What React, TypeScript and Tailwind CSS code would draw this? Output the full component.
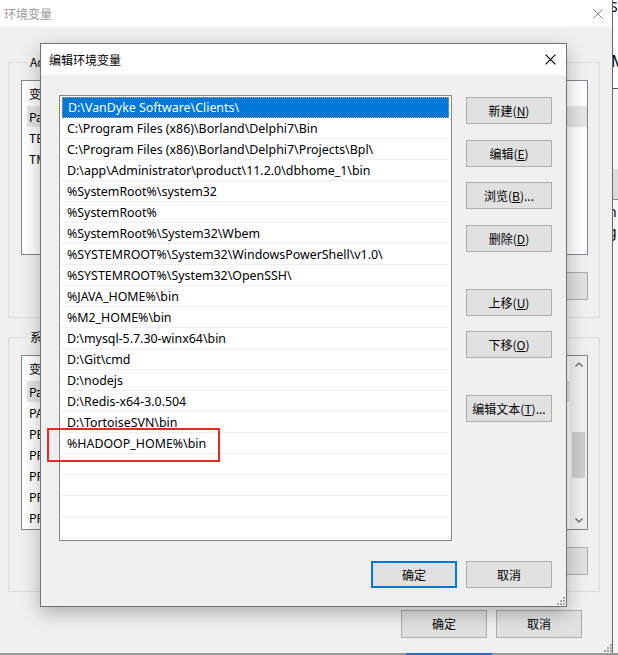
import React from "react";

const pathRows: string[] = [
  "D:\\VanDyke Software\\Clients\\",
  "C:\\Program Files (x86)\\Borland\\Delphi7\\Bin",
  "C:\\Program Files (x86)\\Borland\\Delphi7\\Projects\\Bpl\\",
  "D:\\app\\Administrator\\product\\11.2.0\\dbhome_1\\bin",
  "%SystemRoot%\\system32",
  "%SystemRoot%",
  "%SystemRoot%\\System32\\Wbem",
  "%SYSTEMROOT%\\System32\\WindowsPowerShell\\v1.0\\",
  "%SYSTEMROOT%\\System32\\OpenSSH\\",
  "%JAVA_HOME%\\bin",
  "%M2_HOME%\\bin",
  "D:\\mysql-5.7.30-winx64\\bin",
  "D:\\Git\\cmd",
  "D:\\nodejs",
  "D:\\Redis-x64-3.0.504",
  "D:\\TortoiseSVN\\bin",
  "%HADOOP_HOME%\\bin",
  "",
  "",
  "",
  "",
];

function CloseX({ color, size = 10 }: { color: string; size?: number }) {
  return (
    <svg width={size} height={size} viewBox="0 0 10 10">
      <path d="M0.5 0.5 L9.5 9.5 M9.5 0.5 L0.5 9.5" stroke={color} strokeWidth="1" fill="none" />
    </svg>
  );
}

function Grip() {
  return (
    <svg width="9" height="9" viewBox="0 0 9 9">
      <g fill="#a8a8a8">
        <rect x="7" y="1" width="2" height="2" />
        <rect x="4" y="4" width="2" height="2" />
        <rect x="7" y="4" width="2" height="2" />
        <rect x="1" y="7" width="2" height="2" />
        <rect x="4" y="7" width="2" height="2" />
        <rect x="7" y="7" width="2" height="2" />
      </g>
    </svg>
  );
}

function Btn({ children, className = "" }: { children: React.ReactNode; className?: string }) {
  return (
    <div
      className={`flex items-center justify-center h-[27px] w-[86px] bg-[#e1e1e1] text-[12px] text-black leading-none ${className}`}
    >
      {children}
    </div>
  );
}

function BgListView({ names, scroll }: { names: string[]; scroll?: boolean }) {
  return (
    <div className="h-[175px] w-[567px] border border-[#828790] bg-white flex overflow-hidden">
      <div className="flex-1 flex flex-col">
        <div className="h-[25px] flex items-center pl-[7px] text-[12px] text-black">
          <span className="w-[160px]">变量</span>
          <span>值</span>
        </div>
        {names.map((n, i) => (
          <div
            key={i}
            className={`h-[21px] flex items-center ml-[5px] pl-[2px] text-[12px] text-black ${
              i === 0 ? "bg-[#e5e5e5]" : ""
            }`}
          >
            {n}
          </div>
        ))}
      </div>
      {scroll ? (
        <div className="w-[17px] h-full flex flex-col bg-[#f0f0f0]">
          <div className="h-[17px] flex items-center justify-center">
            <svg width="8" height="5" viewBox="0 0 8 5">
              <path d="M0.5 4.5 L4 1 L7.5 4.5" stroke="#606060" strokeWidth="1.2" fill="none" />
            </svg>
          </div>
          <div className="flex-1 flex flex-col pt-[59px] px-[2px]">
            <div className="h-[46px] bg-[#cdcdcd]" />
          </div>
          <div className="h-[17px] flex items-center justify-center">
            <svg width="8" height="5" viewBox="0 0 8 5">
              <path d="M0.5 0.5 L4 4 L7.5 0.5" stroke="#606060" strokeWidth="1.2" fill="none" />
            </svg>
          </div>
        </div>
      ) : null}
    </div>
  );
}

function GroupButtons() {
  return (
    <div className="flex justify-end gap-[9px] mt-[17px]">
      <Btn className="h-[28px] border border-[#adadad]">新建(<u>W</u>)...</Btn>
      <Btn className="h-[28px] border border-[#adadad]">编辑(<u>I</u>)...</Btn>
      <Btn className="h-[28px] border border-[#adadad] w-[80px]">删除(<u>L</u>)</Btn>
    </div>
  );
}

export default function App() {
  const cjk = "font-['Microsoft_YaHei','Noto_Sans_CJK_SC',sans-serif]";
  return (
    <div className={`relative w-[618px] h-[655px] overflow-hidden bg-[#f0f0f0] ${cjk}`}>
      {/* background window */}
      <div className="absolute left-0 top-0 w-[612px] h-[653px] flex flex-col bg-[#f0f0f0]">
        <div className="h-[27px] bg-white flex items-center justify-between pl-[4px] pr-[9px]">
          <span className="text-[12px] text-[#9a9a9a]">环境变量</span>
          <CloseX color="#8a8a8a" />
        </div>
        <div className="flex-1 flex flex-col px-[8px]">
          <fieldset className="mt-[27px] w-[592px] border border-[#dcdcdc] pl-[12px] pr-[11px] pt-[10px] pb-[17px]">
            <legend className="ml-[7px] px-[2px] text-[12px] leading-[16px] text-black">
              Admin 的用户变量
            </legend>
            <BgListView names={["Path", "TEMP", "TMP"]} />
            <GroupButtons />
          </fieldset>
          <fieldset className="mt-[11px] w-[592px] border border-[#dcdcdc] pl-[12px] pr-[11px] pt-[10px] pb-[16px]">
            <legend className="ml-[7px] px-[2px] text-[12px] leading-[16px] text-black">
              系统变量(<u>S</u>)
            </legend>
            <BgListView
              names={["Path", "PATHEXT", "PERL5LIB", "PROCESSOR_ARCHITECTURE", "PROCESSOR_IDENTIFIER", "PROCESSOR_LEVEL", "PROCESSOR_REVISION"]}
              scroll
            />
            <GroupButtons />
          </fieldset>
          <div className="flex justify-end gap-[9px] mt-[18px] pr-[22px]">
            <Btn className="h-[28px] border border-[#adadad]">确定</Btn>
            <Btn className="h-[28px] border border-[#adadad]">取消</Btn>
          </div>
        </div>
        <div className="absolute right-[0px] bottom-[1px]">
          <Grip />
        </div>
      </div>

      {/* bottom taskbar edge */}
      <div className="absolute left-0 bottom-0 w-[618px] h-[2px] bg-[#9a9a9a] flex">
        <div className="ml-[406px] w-[86px] h-full bg-[#2a6fbf]" />
      </div>

      {/* right neighbouring window strip */}
      <div className="absolute left-[612px] top-0 w-[6px] h-[653px] border-l border-[#6a6a6a] bg-[#f7f7f7] flex flex-col overflow-hidden text-[14px] text-black font-['Noto_Sans',sans-serif] leading-none">
        <div className="h-[18px] bg-white -ml-[3px]">S</div>
        <div className="h-[35px] bg-white" />
        <div className="h-[35px] bg-white -ml-[2px] text-[16px]">M</div>
        <div className="h-[1px] bg-[#555]" />
        <div className="h-[80px]" />
        <div className="h-[30px] bg-[#dcdcdc]" />
        <div className="h-[1px] bg-[#888]" />
        <div className="h-[25px] -ml-[5px] pt-[5px]">n</div>
        <div className="h-[25px] -ml-[5px]">g</div>
      </div>

      {/* foreground dialog */}
      <div className="absolute left-[40px] top-[43px] w-[527px] h-[564px] border border-[#717171] bg-[#f0f0f0] shadow-[0_6px_18px_rgba(0,0,0,0.28)] flex flex-col">
        <div className="h-[31px] bg-white flex items-center justify-between pl-[8px] pr-[10px]">
          <span className="text-[12px] text-black">编辑环境变量</span>
          <CloseX color="#000000" size={11} />
        </div>
        <div className="flex-1 flex flex-col pl-[18px] pr-[14px] pt-[20px]">
          <div className="flex">
            <div className="w-[393px] h-[446px] border border-[#828790] bg-white px-[2px] pt-[1px] flex flex-col overflow-hidden font-['Segoe_UI','Noto_Sans',sans-serif] text-[12.4px]">
              {pathRows.map((r, i) => (
                <div
                  key={i}
                  className={`h-[21px] shrink-0 flex items-center pl-[5px] pt-[2px] whitespace-nowrap ${
                    i === 0
                      ? "bg-[#0078d7] text-white border border-dotted border-[#d9a35a]"
                      : "text-black border-b border-[#efefef]"
                  }`}
                >
                  {r}
                </div>
              ))}
            </div>
            <div className="ml-[14px] flex flex-col">
              <Btn className="mt-[2px] border border-[#adadad]">新建(<u>N</u>)</Btn>
              <Btn className="mt-[16px] border border-[#adadad]">编辑(<u>E</u>)</Btn>
              <Btn className="mt-[15px] border border-[#adadad]">浏览(<u>B</u>)...</Btn>
              <Btn className="mt-[16px] border border-[#adadad]">删除(<u>D</u>)</Btn>
              <Btn className="mt-[37px] border border-[#adadad]">上移(<u>U</u>)</Btn>
              <Btn className="mt-[15px] border border-[#adadad]">下移(<u>O</u>)</Btn>
              <Btn className="mt-[37px] border border-[#adadad]">编辑文本(<u>T</u>)...</Btn>
            </div>
          </div>
          <div className="flex justify-end gap-[9px] mt-[20px]">
            <Btn className="border-2 border-[#0078d7]">确定</Btn>
            <Btn className="border border-[#adadad]">取消</Btn>
          </div>
        </div>
        <div className="absolute right-[1px] bottom-[1px]">
          <Grip />
        </div>
        {/* red annotation */}
        <div className="absolute left-[6px] top-[384px] w-[173px] h-[34px] border-2 border-[#f02420]" />
      </div>
    </div>
  );
}
